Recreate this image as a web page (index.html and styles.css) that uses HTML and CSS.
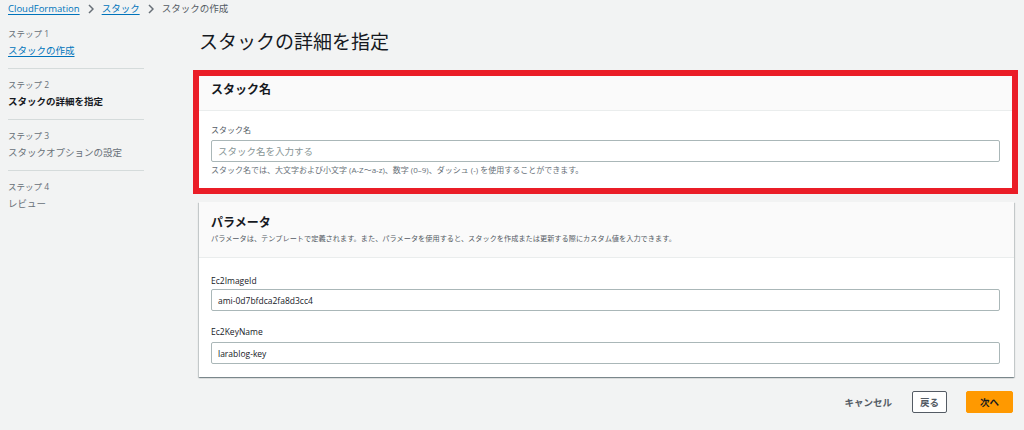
FILE: index.html
```html
<!DOCTYPE html>
<html lang="ja">
<head>
<meta charset="utf-8">
<title>スタックの詳細を指定</title>
<link rel="stylesheet" href="styles.css">
</head>
<body>
<div class="crumbs">
  <a class="crumb-link" href="#">CloudFormation</a>
  <svg class="chev" width="6" height="10" viewBox="0 0 6 10"><path d="M1 1l4 4-4 4" fill="none" stroke="#687078" stroke-width="1.5"/></svg>
  <a class="crumb-link" href="#">スタック</a>
  <svg class="chev" width="6" height="10" viewBox="0 0 6 10"><path d="M1 1l4 4-4 4" fill="none" stroke="#687078" stroke-width="1.5"/></svg>
  <span class="crumb-current">スタックの作成</span>
</div>
<div class="layout">
  <nav class="nav">
    <div class="step">
      <div class="step-label">ステップ 1</div>
      <a class="step-title link" href="#">スタックの作成</a>
    </div>
    <div class="step">
      <div class="step-label">ステップ 2</div>
      <div class="step-title current">スタックの詳細を指定</div>
    </div>
    <div class="step">
      <div class="step-label">ステップ 3</div>
      <div class="step-title muted">スタックオプションの設定</div>
    </div>
    <div class="step last">
      <div class="step-label">ステップ 4</div>
      <div class="step-title muted">レビュー</div>
    </div>
  </nav>
  <main class="main">
    <h1 class="page-title">スタックの詳細を指定</h1>
    <div class="highlight">
      <section class="card">
        <div class="card-head head-tight">
          <h2 class="card-title">スタック名</h2>
        </div>
        <div class="card-body">
          <label class="field-label">スタック名</label>
          <div class="input placeholder">スタック名を入力する</div>
          <div class="help">スタック名では、大文字および小文字 (A-Z～a-z)、数字 (0–9)、ダッシュ (-) を使用することができます。</div>
        </div>
      </section>
    </div>
    <section class="card card2">
      <div class="card-head">
        <h2 class="card-title">パラメータ</h2>
        <div class="card-desc">パラメータは、テンプレートで定義されます。また、パラメータを使用すると、スタックを作成または更新する際にカスタム値を入力できます。</div>
      </div>
      <div class="card-body body2">
        <label class="field-label latin">Ec2ImageId</label>
        <div class="input value">ami-0d7bfdca2fa8d3cc4</div>
        <label class="field-label latin second">Ec2KeyName</label>
        <div class="input value">larablog-key</div>
      </div>
    </section>
    <div class="actions">
      <button class="btn-link">キャンセル</button>
      <button class="btn">戻る</button>
      <button class="btn primary">次へ</button>
    </div>
  </main>
</div>
</body>
</html>
```
FILE: styles.css
```css
* { box-sizing: border-box; }
body {
  margin: 0;
  background: #f2f3f3;
  font-family: "Open Sans", "Noto Sans CJK JP", sans-serif;
  color: #16191f;
}
.crumbs {
  height: 18px;
  padding-left: 8px;
  display: flex;
  align-items: center;
  font-size: 9.5px;
  line-height: 14px;
}
.crumb-link {
  color: #0073bb;
  text-decoration: underline;
  text-underline-offset: 2px;
}
.chev { margin: 0 8px 0 8px; flex: none; }
.crumb-current { color: #545b64; }

.layout { display: flex; }
.nav { width: 136px; margin-left: 8px; flex: none; font-size: 9.5px; line-height: 12px; }
.step {
  padding: 10px 0 9px;
  border-bottom: 1px solid #d5dbdb;
}
.step.last { border-bottom: none; }
.step-label {
  height: 12px;
  font-size: 8.5px;
  line-height: 12px;
  color: #687078;
}
.step-title {
  display: block;
  height: 16px;
  margin-top: 3px;
  font-size: 9.5px;
  line-height: 16px;
  white-space: nowrap;
}
.step-title.link {
  width: fit-content;
  color: #0073bb;
  text-decoration: underline;
  text-underline-offset: 2px;
}
.step-title.current { color: #16191f; font-weight: 700; }
.step-title.muted { color: #687078; }

.main { margin-left: 55px; width: 815px; flex: none; }
.page-title {
  margin: 10px 0 0;
  font-size: 19px;
  line-height: 28px;
  font-weight: 400;
  color: #16191f;
}
.highlight {
  margin: 14px -4px 0 -6px;
  border: 6px solid #ea1d27;
}
.card {
  background: #fff;
}
.card2 {
  margin-top: 8px;
  box-shadow: 0 1px 1px 0 rgba(0,28,36,.3), 1px 1px 1px 0 rgba(0,28,36,.15), -1px 1px 1px 0 rgba(0,28,36,.15);
}
.card-head {
  background: #fafafa;
  border-bottom: 1px solid #eaeded;
  padding: 12px 12px 13px;
}
.card-head.head-tight { padding: 5px 12px 11px; }
.card-title {
  margin: 0;
  font-size: 12px;
  line-height: 18px;
  font-weight: 700;
}
.card-desc {
  font-size: 7.2px;
  line-height: 12px;
  color: #545b64;
}
.card-body { padding: 13px 12px 13px; }
.card-body.body2 { padding-top: 17px; }
.field-label {
  display: block;
  font-size: 8px;
  line-height: 12px;
  color: #545b64;
  margin-bottom: 4px;
}
.field-label.latin { font-size: 8.5px; color: #16191f; margin-bottom: 2px; }
.field-label.second { margin-top: 15px; margin-bottom: 4px; }
.input {
  width: 789px;
  height: 22px;
  border: 1px solid #aab7b8;
  border-radius: 2px;
  background: #fff;
  padding: 0 6px;
  display: flex;
  align-items: center;
  font-size: 8.5px;
}
.input.placeholder { color: #879596; font-size: 9.5px; }
.input.value { color: #16191f; }
.help {
  margin-top: 2px;
  font-size: 8px;
  line-height: 11px;
  color: #687078;
}
.actions {
  margin-top: 14px;
  margin-right: 1px;
  display: flex;
  justify-content: flex-end;
  align-items: center;
}
.actions button { font-family: inherit; cursor: pointer; }
.btn-link {
  background: none;
  border: none;
  padding: 0;
  font-size: 9.5px;
  font-weight: 700;
  color: #545b64;
  margin-right: 20px;
}
.btn {
  height: 22px;
  padding: 0;
  border: 1px solid #545b64;
  border-radius: 2px;
  background: #fff;
  color: #545b64;
  font-size: 9.5px;
  font-weight: 700;
  width: 35px;
  white-space: nowrap;
}
.btn.primary {
  margin-left: 19px;
  width: 47px;
  background: #ff9900;
  border-color: #ff9900;
  color: #16191f;
}
```
